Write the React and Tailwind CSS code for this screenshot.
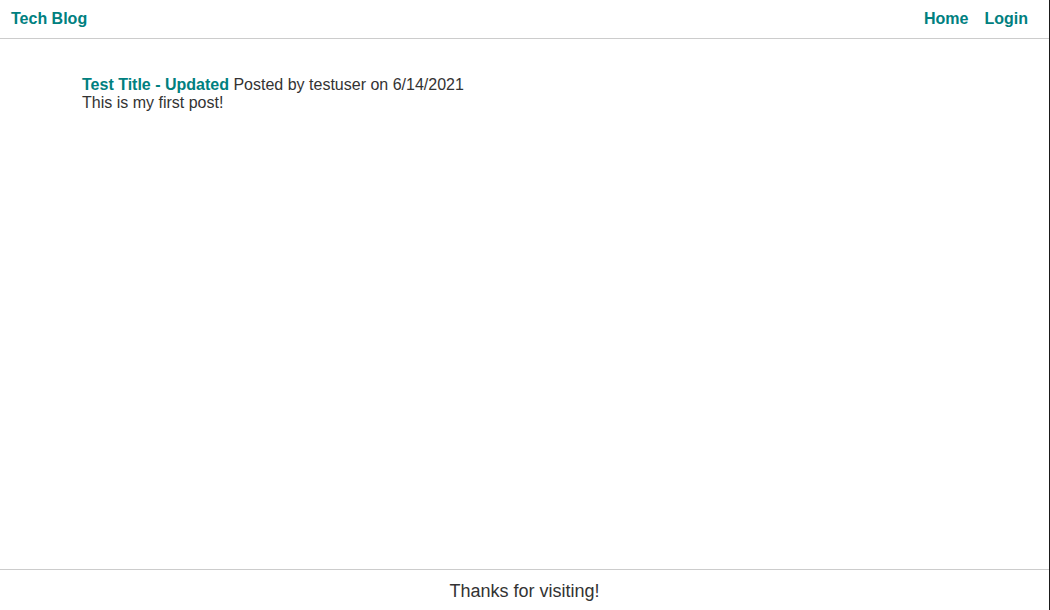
import React from 'react';

// Kopfzeile mit Blog-Name und Navigation
const Header = () => (
  <header className="flex h-[39px] items-center justify-between border-b border-[#cccccc] pl-[11px] pr-[21px]">
    <a href="#" className="text-[16px] font-bold text-[#008080]">Tech Blog</a>
    <nav className="flex gap-[16px] text-[16px] font-bold text-[#008080]">
      <a href="#">Home</a>
      <a href="#">Login</a>
    </nav>
  </header>
);

// Einzelner Beitrag
const Post = ({ post }) => (
  <article className="text-[16px] leading-[18px] text-[#333333]">
    <div>
      <a href="#" className="font-bold text-[#008080]">{post.title}</a>{' '}
      Posted by {post.user} on {post.date}
    </div>
    <p>{post.body}</p>
  </article>
);

const posts = [
  { id: 1, title: 'Test Title - Updated', user: 'testuser', date: '6/14/2021', body: 'This is my first post!' },
];

const App = () => {
  return (
    <div
      className="flex h-[610px] w-[1050px] flex-col border-r border-[#1a1a1a] bg-white"
      style={{ fontFamily: '"Liberation Sans", Arial, sans-serif' }}
    >
      <Header />
      <main className="flex-1 pl-[82px] pt-[37px]">
        {posts.map((post) => (
          <Post key={post.id} post={post} />
        ))}
      </main>
      <footer className="flex h-[41px] items-center justify-center border-t border-[#cccccc] pt-[2px] text-[18px] text-[#333333]">
        Thanks for visiting!
      </footer>
    </div>
  );
};

export default App;
